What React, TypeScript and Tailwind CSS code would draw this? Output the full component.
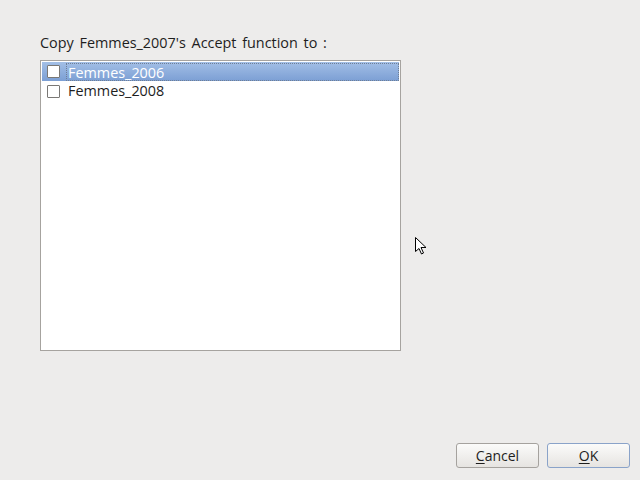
import { FC } from 'react';

const items = [
  { name: 'Femmes_2006', selected: true },
  { name: 'Femmes_2008', selected: false },
];

const Checkbox: FC = () => (
  <span className="inline-block w-[13px] h-[13px] bg-white border border-[#7a7875] rounded-[1px] shrink-0" />
);

const App: FC = () => {
  return (
    <div
      className="relative w-[640px] h-[480px] bg-[#edeceb] text-[14.4px] text-[#1e1e1e]"
      style={{ fontFamily: '"Open Sans", "DejaVu Sans", sans-serif' }}
    >
      <div className="flex flex-col h-full pt-[34px] pl-[40px] pr-[10px] pb-[12px]">
        <p className="h-[18px] leading-[18px] [word-spacing:2px]">
          Copy Femmes_2007's Accept function to :
        </p>

        <div className="mt-[8px] w-[361px] h-[291px] bg-white border border-[#a6a39f] p-[1px]">
          {items.map((item) =>
            item.selected ? (
              <div
                key={item.name}
                className="flex items-center h-[19px] pl-[5px] bg-gradient-to-b from-[#a3bfe6] to-[#7c9fd4] text-white"
              >
                <Checkbox />
                <span className="ml-[6px] h-[18px] leading-[17px] flex-1 border border-dotted border-[#6f7f96] pl-[1px]">
                  {item.name}
                </span>
              </div>
            ) : (
              <div key={item.name} className="flex items-center h-[20px] pl-[5px]">
                <Checkbox />
                <span className="ml-[7px] leading-[18px] pl-[1px]">{item.name}</span>
              </div>
            )
          )}
        </div>

        <div className="mt-auto flex justify-end gap-[8px]">
          <button className="w-[83px] h-[25px] rounded-[3px] border border-[#a5a29e] bg-gradient-to-b from-[#fbfbfa] to-[#e6e4e1] text-[14px]">
            <span className="underline underline-offset-2">C</span>ancel
          </button>
          <button className="w-[83px] h-[25px] rounded-[3px] border border-[#8aa3c9] bg-gradient-to-b from-[#fbfbfa] to-[#e6e4e1] text-[14px]">
            <span className="underline underline-offset-2">O</span>K
          </button>
        </div>
      </div>

      {/* mouse pointer */}
      <svg
        className="absolute left-[414px] top-[236px]"
        width="14"
        height="20"
        viewBox="0 0 14 20"
      >
        <path
          d="M1.5 1.5 L1.5 15.5 L5 12.5 L7.5 18 L9.5 17 L7 11.5 L12 11.5 Z"
          fill="#fff"
          stroke="#000"
          strokeWidth="1"
          strokeLinejoin="round"
        />
      </svg>
    </div>
  );
};

export default App;
